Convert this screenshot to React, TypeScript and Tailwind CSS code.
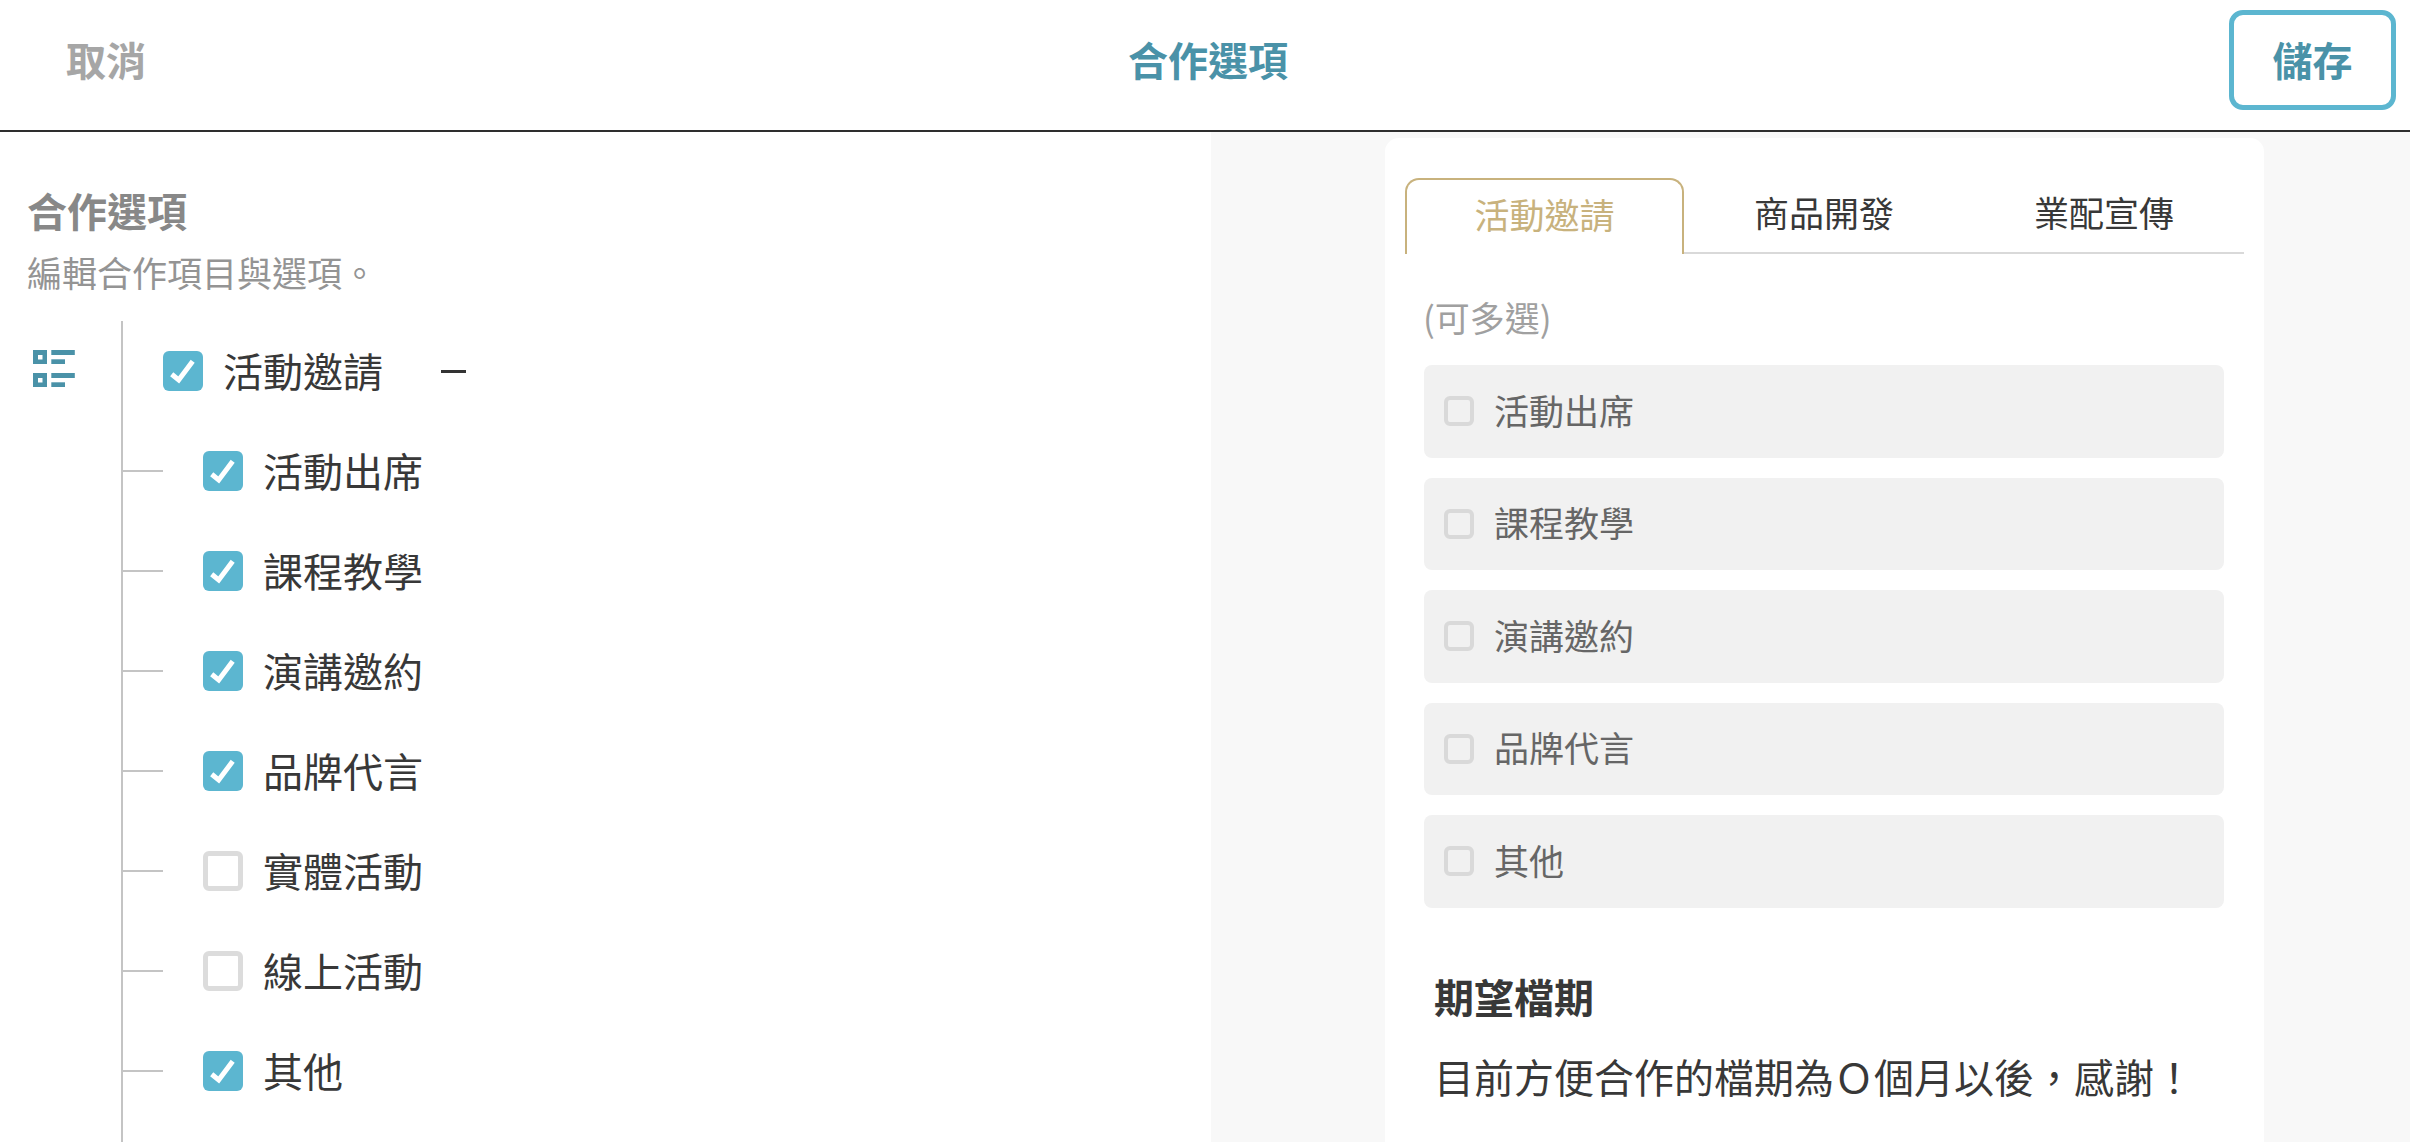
import React from 'react';

const PARENT_ITEMS = [
  { label: '活動出席', checked: true },
  { label: '課程教學', checked: true },
  { label: '演講邀約', checked: true },
  { label: '品牌代言', checked: true },
  { label: '實體活動', checked: false },
  { label: '線上活動', checked: false },
  { label: '其他', checked: true },
];

const PREVIEW_OPTIONS = ['活動出席', '課程教學', '演講邀約', '品牌代言', '其他'];

function Checkbox({ checked }: { checked: boolean }) {
  if (!checked) {
    return <span className="block h-10 w-10 shrink-0 rounded-[6px] border-[5px] border-[#dcdcdc] bg-white" />;
  }
  return (
    <span className="block h-10 w-10 shrink-0 rounded-[6px] bg-[#5cb6d0]">
      <svg viewBox="0 0 40 40" className="h-10 w-10">
        <path d="M8.700 23.300L15.700 29L29.700 10.300" fill="none" stroke="#fff" strokeWidth="5" />
      </svg>
    </span>
  );
}

function ListIcon() {
  return (
    <svg viewBox="0 0 42 37" className="h-[37px] w-[42px]" fill="#4a92a8">
      <path fillRule="evenodd" d="M0 0h14v14H0zM5 5v4.500h4.500V5z" />
      <rect x="18.300" y="0" width="23.500" height="5" />
      <rect x="18.300" y="9.300" width="13.700" height="4.700" />
      <path fillRule="evenodd" d="M0 23h14v14H0zM5 28v4.500h4.500V28z" />
      <rect x="18.300" y="23" width="23.500" height="5" />
      <rect x="18.300" y="32.300" width="13.700" height="4.700" />
    </svg>
  );
}

export default function App() {
  return (
    <div lang="zh-Hant" className="flex h-[1142px] w-[2410px] flex-col overflow-hidden bg-white font-['Noto_Sans_CJK_TC','Noto_Sans',sans-serif] text-[#383838]">
      {/* Header */}
      <header className="flex h-[132px] shrink-0 items-center border-b-2 border-[#2e2e2e] pb-[10px] pl-[20px] pr-[14px]">
        <div className="flex-1">
          <button className="ml-[46px] pb-[2px] text-[40px] font-bold leading-none text-[#a6a6a6]">取消</button>
        </div>
        <h1 className="pb-[2px] text-[40px] font-bold leading-none text-[#4a92a8]">合作選項</h1>
        <div className="flex flex-1 justify-end">
          <button className="h-[100px] w-[167px] rounded-[14px] border-[5px] border-[#5cb6d0] pb-[3px] text-[40px] font-bold leading-none text-[#4a92a8]">儲存</button>
        </div>
      </header>

      <div className="flex min-h-0 flex-1">
        {/* Editor */}
        <section className="flex w-[1211px] shrink-0 flex-col pl-[27px] pt-[50px]">
          <h2 className="text-[40px] font-bold leading-[56px] text-[#888]">合作選項</h2>
          <p className="mt-[8px] mb-[2px] text-[35px] leading-[52px] text-[#949494]">編輯合作項目與選項。</p>
          <div className="mt-[21px] flex min-h-0 flex-1">
            <div className="w-[94px] shrink-0 pl-[6px] pt-[29px]">
              <ListIcon />
            </div>
            <div className="flex-1 border-l-2 border-[#c4c4c4]">
              <div className="flex h-[100px] items-center pl-10">
                <Checkbox checked />
                <span className="ml-5 pb-[3px] text-[40px]">活動邀請</span>
                <span className="ml-[58px] block h-[3px] w-[25px] bg-[#333]" />
              </div>
              {PARENT_ITEMS.map((item) => (
                <div key={item.label} className="flex h-[100px] items-center">
                  <span className="block h-[2px] w-10 bg-[#c4c4c4]" />
                  <span className="ml-10">
                    <Checkbox checked={item.checked} />
                  </span>
                  <span className="ml-5 pb-[3px] text-[40px]">{item.label}</span>
                </div>
              ))}
            </div>
          </div>
        </section>

        {/* Preview */}
        <section className="min-w-0 flex-1 bg-[#f8f8f8] pl-[174px] pt-[6px]">
          <div className="h-[1010px] w-[879px] rounded-t-[14px] bg-white px-5 pt-10">
            <div className="flex h-[76px] border-b-2 border-[#d9d9d9]">
              <div className="relative -mb-[2px] flex h-[76px] w-[279px] items-center justify-center rounded-t-[14px] border-2 border-b-0 border-[#c8b27d] bg-white pb-[5px] text-[35px] text-[#c8b27d]">活動邀請</div>
              <div className="flex w-[280px] items-center justify-center pb-[5px] text-[35px]">商品開發</div>
              <div className="flex w-[280px] items-center justify-center pb-[5px] text-[35px]">業配宣傳</div>
            </div>
            <p className="mt-[37px] pl-[18px] text-[35px] leading-[52px] text-[#a0a0a0]">(可多選)</p>
            <div className="mt-[22px] flex flex-col gap-5 pl-[19px]">
              {PREVIEW_OPTIONS.map((label) => (
                <div key={label} className="flex h-[92.5px] w-[800px] items-center rounded-[8px] bg-[#f1f1f1] pl-5">
                  <span className="block h-[30px] w-[30px] rounded-[6px] border-4 border-[#d9d9d9] bg-[#f1f1f1]" />
                  <span className="ml-[20px] pb-[3px] text-[35px] text-[#666]">{label}</span>
                </div>
              ))}
            </div>
            <h3 className="mt-[60px] pl-[29px] text-[40px] font-bold leading-[56px]">期望檔期</h3>
            <p className="mt-[24px] pl-[29px] text-[40px] leading-[56px]">目前方便合作的檔期為Ｏ個月以後，感謝！</p>
          </div>
        </section>
      </div>
    </div>
  );
}
